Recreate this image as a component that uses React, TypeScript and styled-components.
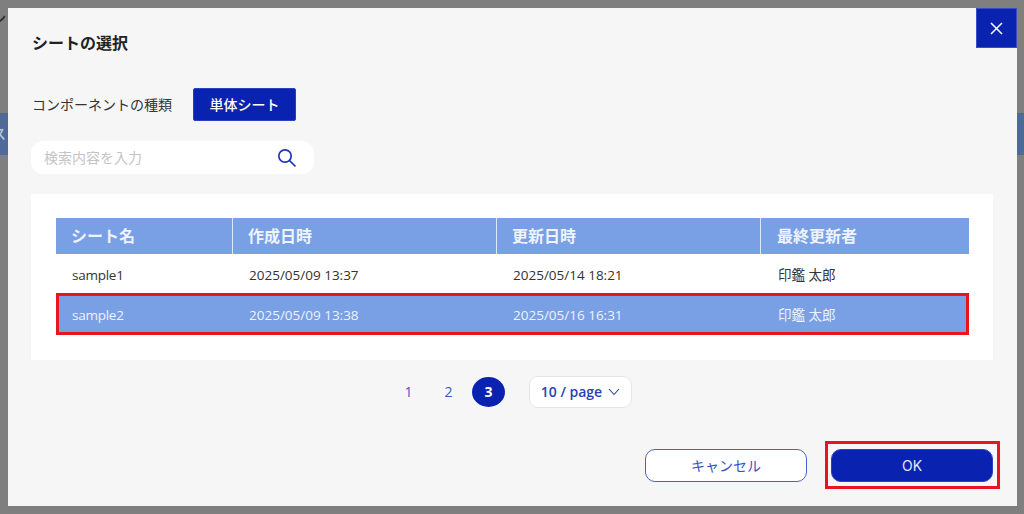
import React from "react";
import styled, { createGlobalStyle } from "styled-components";

const FONT = `Inter, "Noto Sans CJK JP", "Noto Sans", sans-serif`;
const UI_FONT = `"Open Sans", "Noto Sans CJK JP", sans-serif`;
const NAVY = "#0a22b0";

const Global = createGlobalStyle`
  html, body { margin: 0; padding: 0; background: #7f7f7f; }
  #root { width: 1024px; height: 514px; overflow: hidden; }
  * { box-sizing: border-box; }
`;

const Backdrop = styled.div`
  position: relative;
  width: 1024px;
  height: 514px;
  background: #7f7f7f;
  padding: 8px 7px 8px 8px;
  overflow: hidden;
`;

const PageBand = styled.div`
  position: absolute;
  left: 0;
  right: 0;
  top: 113px;
  height: 42px;
  background: #4e6a99;
`;

const PageGlyph = styled.span<{ $top: number; $color: string }>`
  position: absolute;
  left: -8px;
  top: ${(p) => p.$top}px;
  font: 500 14px/20px ${FONT};
  color: ${(p) => p.$color};
`;

const Modal = styled.div`
  position: relative;
  height: 498px;
  background: #f6f6f6;
  padding: 24px 24px 0 23px;
  display: flex;
  flex-direction: column;
`;

const CloseButton = styled.button`
  position: absolute;
  top: 0;
  right: 0;
  width: 41px;
  height: 40px;
  padding: 0;
  border: 1px solid #3a4fc0;
  background: ${NAVY};
  display: flex;
  align-items: center;
  justify-content: center;
`;

const Title = styled.h2`
  margin: 0;
  padding-left: 1px;
  height: 22px;
  font: 700 16px/22px ${FONT};
  color: #222;
`;

const TypeRow = styled.div`
  display: flex;
  align-items: center;
  margin-top: 34px;
  height: 33px;
`;

const TypeLabel = styled.span`
  width: 162px;
  padding-left: 1px;
  font: 400 14px/20px ${FONT};
  color: #333;
`;

const TypeButton = styled.button`
  width: 103px;
  height: 33px;
  border: 1px solid #2a40c0;
  border-radius: 2px;
  background: ${NAVY};
  color: #fff;
  font: 500 14px/20px ${FONT};
  padding: 0;
`;

const Search = styled.div`
  margin-top: 20px;
  width: 283px;
  height: 33px;
  background: #fff;
  border-radius: 12px;
  display: flex;
  align-items: center;
  justify-content: space-between;
  padding: 0 17px 0 13px;
`;

const Placeholder = styled.span`
  font: 400 14px/20px ${FONT};
  color: #c4c4c4;
`;

const TablePanel = styled.div`
  margin-top: 20px;
  background: #fff;
  height: 166px;
  padding: 24px 24px 0 25px;
`;

const Grid = styled.div`
  display: flex;
  flex-direction: column;
  width: 913px;
`;

const Row = styled.div<{ $variant: "head" | "plain" | "selected" }>`
  display: grid;
  grid-template-columns: 177px 264px 264px 208px;
  align-items: center;
  height: ${(p) => (p.$variant === "head" ? "36px" : p.$variant === "plain" ? "39px" : "42px")};
  padding-top: ${(p) => (p.$variant === "head" ? "0" : p.$variant === "plain" ? "2px" : "1px")};
  background: ${(p) => (p.$variant === "plain" ? "#fff" : "#799fe4")};
  color: ${(p) => (p.$variant === "plain" ? "#333" : "#eef3fc")};
  box-shadow: ${(p) => (p.$variant === "selected" ? "inset 0 0 0 3px #e8151f" : "none")};
  font: ${(p) => (p.$variant === "head" ? `700 16px/20px ${FONT}` : `400 13.5px/20px ${UI_FONT}`)};
`;

const HeadCell = styled.div`
  height: 100%;
  display: flex;
  align-items: center;
  padding-left: 15px;
  border-right: 1px solid #dfe8f9;
  &:last-child {
    border-right: 0;
    padding-left: 16px;
  }
`;

const Cell = styled.div`
  padding-left: 16px;
  &:last-child {
    padding-left: 17px;
  }
`;

const NameCell = styled(Cell)`
  letter-spacing: -0.25px;
`;

const Pager = styled.div`
  margin-top: 15px;
  display: flex;
  align-items: center;
  gap: 7px;
  height: 33px;
  padding-left: 361px;
`;

const PageNum = styled.span<{ $active?: boolean }>`
  width: 33px;
  height: 30px;
  display: flex;
  align-items: center;
  justify-content: center;
  border-radius: 50%;
  background: ${(p) => (p.$active ? NAVY : "transparent")};
  color: ${(p) => (p.$active ? "#fff" : "#3f55c8")};
  font: ${(p) => (p.$active ? 700 : 400)} 14px/20px ${UI_FONT};
`;

const PageSize = styled.div`
  margin-left: 17px;
  width: 103px;
  height: 32px;
  background: #fff;
  border: 1px solid #e6e6e6;
  border-radius: 9px;
  display: flex;
  align-items: center;
  justify-content: center;
  gap: 6px;
  color: #2a3fb8;
  font: 600 14px/20px ${UI_FONT};
`;

const Footer = styled.div`
  margin-top: 41px;
  display: flex;
  justify-content: flex-end;
  gap: 24px;
`;

const CancelButton = styled.button`
  width: 162px;
  height: 33px;
  border: 1px solid #4a60cc;
  border-radius: 10px;
  background: #fff;
  color: #3a50c0;
  font: 400 14px/20px ${FONT};
  padding: 0;
`;

const OkWrap = styled.div`
  position: relative;
  width: 162px;
  height: 33px;
`;

const OkButton = styled.button`
  width: 100%;
  height: 100%;
  border: 1px solid #2a40c0;
  border-radius: 10px;
  background: ${NAVY};
  color: #e6e9f8;
  font: 400 14px/20px ${FONT};
  padding: 0;
`;

const Highlight = styled.div`
  position: absolute;
  left: -6px;
  top: -8px;
  right: -7px;
  bottom: -7px;
  border: 3px solid #e8151f;
  pointer-events: none;
`;

const rows = [
  { name: "sample1", created: "2025/05/09 13:37", updated: "2025/05/14 18:21", by: "印鑑 太郎", v: "plain" as const },
  { name: "sample2", created: "2025/05/09 13:38", updated: "2025/05/16 16:31", by: "印鑑 太郎", v: "selected" as const },
];

export default function App() {
  return (
    <>
      <Global />
      <Backdrop>
        <PageBand />
        <PageGlyph $top={8} $color="#222">ン</PageGlyph>
        <PageGlyph $top={124} $color="#b9c6de">ス</PageGlyph>
        <Modal>
          <CloseButton aria-label="close">
            <svg width="13" height="13" viewBox="0 0 13 13">
              <path d="M1 1L12 12M12 1L1 12" stroke="#fff" strokeWidth="1.5" fill="none" />
            </svg>
          </CloseButton>
          <Title>シートの選択</Title>
          <TypeRow>
            <TypeLabel>コンポーネントの種類</TypeLabel>
            <TypeButton>単体シート</TypeButton>
          </TypeRow>
          <Search>
            <Placeholder>検索内容を入力</Placeholder>
            <svg width="20" height="20" viewBox="0 0 20 20" fill="none" stroke="#2036b8" strokeWidth="1.7">
              <circle cx="8" cy="8" r="6.2" />
              <path d="M12.6 12.6L18.5 18.5" />
            </svg>
          </Search>
          <TablePanel>
            <Grid>
              <Row $variant="head">
                <HeadCell>シート名</HeadCell>
                <HeadCell>作成日時</HeadCell>
                <HeadCell>更新日時</HeadCell>
                <HeadCell>最終更新者</HeadCell>
              </Row>
              {rows.map((r) => (
                <Row key={r.name} $variant={r.v}>
                  <NameCell>{r.name}</NameCell>
                  <Cell>{r.created}</Cell>
                  <Cell>{r.updated}</Cell>
                  <Cell>{r.by}</Cell>
                </Row>
              ))}
            </Grid>
          </TablePanel>
          <Pager>
            <PageNum>1</PageNum>
            <PageNum>2</PageNum>
            <PageNum $active>3</PageNum>
            <PageSize>
              10 / page
              <svg width="12" height="8" viewBox="0 0 12 8" fill="none" stroke="#2a3fb8" strokeWidth="1.1">
                <path d="M1 1L6 6.5L11 1" />
              </svg>
            </PageSize>
          </Pager>
          <Footer>
            <CancelButton>キャンセル</CancelButton>
            <OkWrap>
              <OkButton>OK</OkButton>
              <Highlight />
            </OkWrap>
          </Footer>
        </Modal>
      </Backdrop>
    </>
  );
}
